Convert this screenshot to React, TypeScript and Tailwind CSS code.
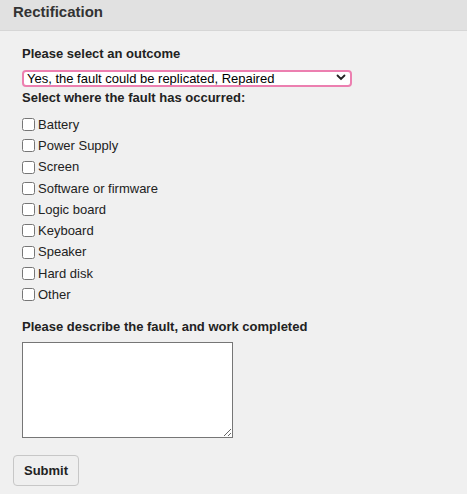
import { useState } from "react";

const PARTS = [
  "Battery",
  "Power Supply",
  "Screen",
  "Software or firmware",
  "Logic board",
  "Keyboard",
  "Speaker",
  "Hard disk",
  "Other",
];

export default function App() {
  const [outcome, setOutcome] = useState("repaired");
  const [checked, setChecked] = useState<Record<string, boolean>>({});

  return (
    <div className="min-h-[494px] bg-[#f0f0f0] text-[#222] font-['Liberation_Sans',Arial,sans-serif] text-[13px]">
      {/* Header */}
      <div className="h-[31px] bg-[#e1e1e1] border-b border-[#d6d6d6] px-[13px] pt-[3px]">
        <h1 className="text-[15px] leading-[18px] font-bold text-[#333]">Rectification</h1>
      </div>

      <form className="pt-[15px] px-[22px]" onSubmit={(e) => e.preventDefault()}>
        <label className="block font-bold leading-[16px] h-[16px]">Please select an outcome</label>

        {/* Outcome select */}
        <div className="relative mt-[7px] w-[330px] h-[17px]">
          <select
            value={outcome}
            onChange={(e) => setOutcome(e.target.value)}
            className="appearance-none w-full h-full bg-white border-2 border-[#ec7fb0] rounded-[4px] pl-[3px] pr-6 text-[13px] leading-[13px] text-black outline-none"
          >
            <option value="repaired">Yes, the fault could be replicated, Repaired</option>
            <option value="not-repaired">Yes, the fault could be replicated, Not repaired</option>
            <option value="no-fault">No, the fault could not be replicated</option>
          </select>
          <svg
            className="absolute right-[6px] top-[5px] pointer-events-none"
            width="10"
            height="7"
            viewBox="0 0 10 7"
          >
            <path d="M1.5 1.5 L5 5 L8.5 1.5" fill="none" stroke="#222" strokeWidth="1.8" strokeLinecap="round" />
          </svg>
        </div>

        <div className="mt-[4px] font-bold leading-[16px] h-[16px]">Select where the fault has occurred:</div>

        {/* Parts */}
        <div className="mt-[8px] flex flex-col gap-y-[0.25px]">
          {PARTS.map((p) => (
            <label key={p} className="h-[21px] flex items-center gap-[3px]">
              <input
                type="checkbox"
                checked={!!checked[p]}
                onChange={(e) => setChecked({ ...checked, [p]: e.target.checked })}
                className="m-0 w-[13px] h-[13px]"
              />
              <span className="text-[#222]">{p}</span>
            </label>
          ))}
        </div>

        <label className="block mt-[14px] font-bold leading-[16px] h-[16px]">
          Please describe the fault, and work completed
        </label>
        <textarea className="block mt-[7px] w-[211px] h-[96px] bg-white border border-[#767676] outline-none resize" />
      </form>

      <div className="px-[13px] pt-[17px] pb-2">
        <button className="w-[66px] h-[31px] bg-[#efefef] border border-[#c7c7c7] rounded-[4px] font-bold text-[13px] text-[#222]">
          Submit
        </button>
      </div>
    </div>
  );
}
